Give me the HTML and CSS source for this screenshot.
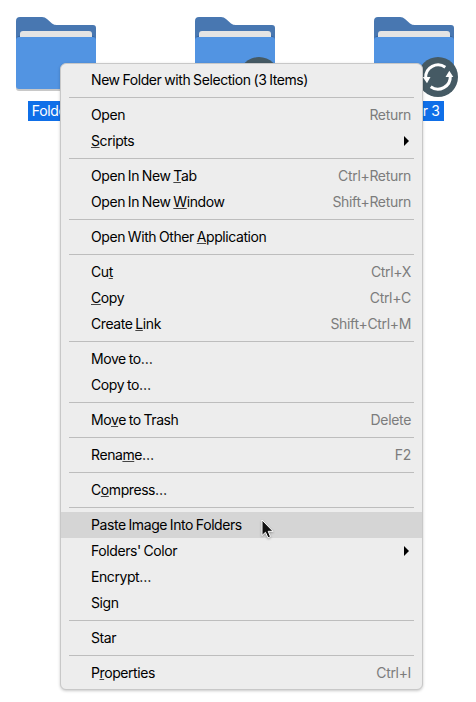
FILE: index.html
```
<!DOCTYPE html>
<html lang="en">
<head>
<meta charset="utf-8">
<title>Files</title>
<link rel="stylesheet" href="styles.css">
</head>
<body>
<svg width="0" height="0" class="defs">
  <symbol id="folder" viewBox="0 0 80 74">
    <path fill="#c8c8c8" d="M0 60H80V71Q80 74 77 74H3Q0 74 0 71Z"/>
    <path fill="#4877b1" d="M0 4Q0 0 4 0H26Q29 0 31 2L36 6.5Q38 8 41 8H77Q80 8 80 11V40H0Z"/>
    <path fill="#36649d" d="M0 23Q0 20 4 18.500H76Q80 20 80 23V30H0Z"/>
    <path fill="#e4e4e4" d="M4 30V17Q4 14 7 14H73Q76 14 76 17V30Z"/>
    <path fill="#5294e2" d="M0 23Q0 20 3 20H77Q80 20 80 23V69Q80 72 77 72H3Q0 72 0 69Z"/>
  </symbol>
  <symbol id="sync" viewBox="0 0 40 40">
    <circle cx="20" cy="20" r="20" fill="#455a64"/>
    <g fill="none" stroke="#fff" stroke-width="3">
      <path d="M27.300 10.200A12.400 12.400 0 0 0 7.700 20.800"/>
      <path d="M12.700 29.800A12.400 12.400 0 0 0 32.300 19.200"/>
    </g>
    <path fill="#fff" d="M4.700 20H12.500L9 26.300ZM27.500 20H35.300L31.300 13.700Z"/>
  </symbol>
</svg>
<main class="desktop">
  <div class="files">
    <div class="file"><svg class="folder"><use href="#folder"/></svg><span class="name">Folder 1</span></div>
    <div class="file"><svg class="folder"><use href="#folder"/></svg><svg class="badge"><use href="#sync"/></svg><span class="name">Folder 2</span></div>
    <div class="file"><svg class="folder"><use href="#folder"/></svg><svg class="badge"><use href="#sync"/></svg><span class="name">Folder 3</span></div>
  </div>
  <div class="menu">
    <div class="item"><span>New Folder with Selection (3 Items)</span></div>
    <hr>
    <div class="item"><span>Open</span><kbd>Return</kbd></div>
    <div class="item"><span><u>S</u>cripts</span><i class="arrow"></i></div>
    <hr>
    <div class="item"><span>Open In New <u>T</u>ab</span><kbd>Ctrl+Return</kbd></div>
    <div class="item"><span>Open In New <u>W</u>indow</span><kbd>Shift+Return</kbd></div>
    <hr>
    <div class="item"><span>Open With Other <u>A</u>pplication</span></div>
    <hr>
    <div class="item"><span>Cu<u>t</u></span><kbd>Ctrl+X</kbd></div>
    <div class="item"><span><u>C</u>opy</span><kbd>Ctrl+C</kbd></div>
    <div class="item"><span>Create <u>L</u>ink</span><kbd>Shift+Ctrl+M</kbd></div>
    <hr>
    <div class="item"><span>Move to…</span></div>
    <div class="item"><span>Copy to…</span></div>
    <hr>
    <div class="item"><span>Mo<u>v</u>e to Trash</span><kbd>Delete</kbd></div>
    <hr>
    <div class="item"><span>Rena<u>m</u>e…</span><kbd>F2</kbd></div>
    <hr>
    <div class="item"><span>C<u>o</u>mpress…</span></div>
    <hr>
    <div class="item hover"><span>Paste Image Into Folders</span></div>
    <div class="item"><span>Folders' Color</span><i class="arrow"></i></div>
    <div class="item"><span>Encrypt…</span></div>
    <div class="item"><span>Sign</span></div>
    <hr>
    <div class="item"><span>Star</span></div>
    <hr>
    <div class="item"><span>P<u>r</u>operties</span><kbd>Ctrl+I</kbd></div>
  </div>
  <svg class="cursor" viewBox="0 0 13 20"><path d="M1 1V16.500L4.500 13.300L7 18.800L9.500 17.700L7.200 12.300H12Z" fill="#111" stroke="#fff" stroke-width="1"/></svg>
</main>
</body>
</html>
```

FILE: styles.css
```
body {
  margin: 0;
  background: #fff;
  font: 14px/26px Inter, "Liberation Sans", sans-serif;
}
.defs { position: absolute; }
.desktop {
  position: relative;
  width: 476px;
  height: 702px;
  overflow: hidden;
}
.files {
  display: flex;
  gap: 99px;
  padding: 17px 0 0 16px;
}
.file {
  position: relative;
  display: flex;
  flex-direction: column;
  align-items: center;
  gap: 10px;
  width: 80px;
  flex: none;
}
.folder { width: 80px; height: 74px; }
.badge {
  position: absolute;
  left: 44px;
  top: 40px;
  width: 40px;
  height: 40px;
}
.name {
  padding: 0 4px;
  background: #0f6fe8;
  color: #fff;
  line-height: 20px;
  letter-spacing: -0.35px;
  white-space: nowrap;
}
.menu {
  position: absolute;
  left: 60px;
  top: 63px;
  box-sizing: border-box;
  width: 363px;
  height: 627px;
  padding: 3px 0;
  border: 1px solid #c8c8c8;
  border-radius: 6px;
  background: #ededed;
  box-shadow: 0 1px 3px rgba(0, 0, 0, 0.22);
}
.item {
  display: flex;
  align-items: center;
  justify-content: space-between;
  height: 26px;
  padding: 0 11px 0 30px;
  color: #000;
  letter-spacing: -0.42px;
  word-spacing: -0.7px;
  white-space: nowrap;
}
.item.hover { background: #d5d5d5; }
.item u {
  text-decoration-color: #444;
  text-decoration-thickness: 1px;
  text-underline-offset: 1px;
  text-decoration-skip-ink: none;
}
.item kbd { font: inherit; color: #7c7c7c; letter-spacing: -0.33px; }
.arrow {
  margin-right: 2px;
  border: solid transparent;
  border-width: 5px 0 5px 5px;
  border-left-color: #000;
}
hr {
  height: 1px;
  margin: 4px 8px;
  border: 0;
  background: #bdbdbd;
}
.cursor {
  position: absolute;
  left: 261px;
  top: 519px;
  width: 13px;
  height: 20px;
  filter: drop-shadow(0 1px 1px rgba(0, 0, 0, 0.3));
}
```
